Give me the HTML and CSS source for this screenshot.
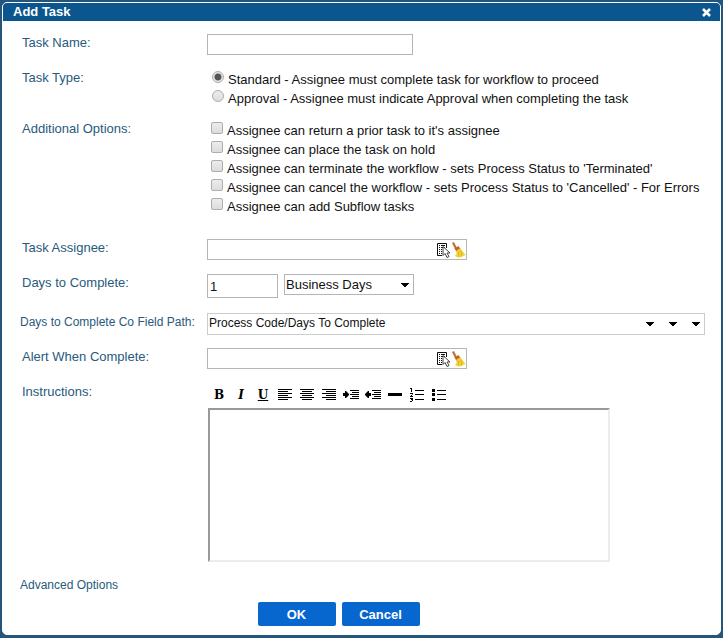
FILE: index.html
```html
<!DOCTYPE html>
<html lang="en">
<head>
<meta charset="utf-8">
<title>Add Task</title>
<link rel="stylesheet" href="styles.css">
</head>
<body>
<svg class="defs" aria-hidden="true">
  <symbol id="pick" viewBox="0 0 15 16">
    <path d="M10.500 6V1.500H1.500V13.500H6" fill="#fff" stroke="#111"/>
    <path d="M3 3.500h1M5 3.500h4M3 5.500h1M5 5.500h4M3 7.500h1M5 7.500h1M3 9.500h1M5 9.500h1M3 11.500h1M5 11.500h1" stroke="#111"/>
    <path d="M7 4.500v9l2-2 2 4 2-1-2-3.500h3z" fill="#fff" stroke="#444"/>
  </symbol>
  <symbol id="broom" viewBox="0 0 15 16">
    <path d="M1 1l2-1 3 6-2 1z" fill="#b5793a"/>
    <path d="M3.500 6.500l4-2.500 2 3-4 3z" fill="#c9602c"/>
    <path d="M5 9l4.500-3c1.500 3 3 4 5 7L9 15.500c-2.500 0-4-.5-5-2 1.500-.5 2-2 1-4.500z" fill="#f2d435"/>
    <path d="M7 9.500c1 2 1 3.500 0 5M9 8.500c2 2 2 4 1.500 6" fill="none" stroke="#cfa41e" stroke-width=".8"/>
  </symbol>
  <symbol id="arrow" viewBox="0 0 8 4">
    <path d="M0 0h8v1H7v1H6v1H5v1H3V3H2V2H1V1H0z"/>
  </symbol>
</svg>

<form class="dialog">
  <header class="titlebar">
    <h1 class="title">Add Task</h1>
    <button type="button" class="close" aria-label="Close"><svg width="9" height="9" viewBox="0 0 9 9"><path d="M1 1l7 7M8 1L1 8" stroke="#fff" stroke-width="2.600"/></svg></button>
  </header>

  <main class="content">
    <div class="row">
      <label class="label" for="name">Task Name:</label>
      <input class="field field-name" id="name" type="text">
    </div>

    <div class="row" role="radiogroup" aria-labelledby="type-label">
      <span class="label" id="type-label">Task Type:</span>
      <div class="options">
        <label class="option option-radio"><input class="tick radio" type="radio" name="type" checked>Standard - Assignee must complete task for workflow to proceed</label>
        <label class="option option-radio"><input class="tick radio" type="radio" name="type">Approval - Assignee must indicate Approval when completing the task</label>
      </div>
    </div>

    <div class="row" role="group" aria-labelledby="extra-label">
      <span class="label" id="extra-label">Additional Options:</span>
      <div class="options">
        <label class="option"><input class="tick" type="checkbox">Assignee can return a prior task to it's assignee</label>
        <label class="option"><input class="tick" type="checkbox">Assignee can place the task on hold</label>
        <label class="option"><input class="tick" type="checkbox">Assignee can terminate the workflow - sets Process Status to 'Terminated'</label>
        <label class="option"><input class="tick" type="checkbox">Assignee can cancel the workflow - sets Process Status to 'Cancelled' - For Errors</label>
        <label class="option"><input class="tick" type="checkbox">Assignee can add Subflow tasks</label>
      </div>
    </div>

    <div class="row row-section">
      <label class="label" for="assignee">Task Assignee:</label>
      <div class="field picker">
        <input class="bare" id="assignee" type="text">
        <button type="button" class="tool" aria-label="Select"><svg width="15" height="16"><use href="#pick"/></svg></button>
        <button type="button" class="tool" aria-label="Clear"><svg width="15" height="16"><use href="#broom"/></svg></button>
      </div>
    </div>

    <div class="row">
      <label class="label" for="days">Days to Complete:</label>
      <div class="inline">
        <input class="field field-days" id="days" type="text" value="1">
        <div class="select-wrap">
          <select class="field select" aria-label="Day type"><option>Business Days</option><option>Calendar Days</option></select>
          <svg class="select-arrow" width="8" height="4"><use href="#arrow"/></svg>
        </div>
      </div>
    </div>

    <div class="row row-path">
      <label class="label label-small" for="path">Days to Complete Co Field Path:</label>
      <div class="field path">
        <input class="bare bare-small" id="path" type="text" value="Process Code/Days To Complete">
        <button type="button" class="drop" aria-label="First level"><svg width="8" height="4"><use href="#arrow"/></svg></button>
        <button type="button" class="drop" aria-label="Second level"><svg width="8" height="4"><use href="#arrow"/></svg></button>
        <button type="button" class="drop" aria-label="Third level"><svg width="8" height="4"><use href="#arrow"/></svg></button>
      </div>
    </div>

    <div class="row">
      <label class="label" for="alert">Alert When Complete:</label>
      <div class="field picker">
        <input class="bare" id="alert" type="text">
        <button type="button" class="tool" aria-label="Select"><svg width="15" height="16"><use href="#pick"/></svg></button>
        <button type="button" class="tool" aria-label="Clear"><svg width="15" height="16"><use href="#broom"/></svg></button>
      </div>
    </div>

    <div class="row">
      <label class="label" for="instructions">Instructions:</label>
      <div class="editor">
        <div class="toolbar" role="toolbar" aria-label="Formatting">
          <button type="button" class="format" aria-label="Bold"><b>B</b></button>
          <button type="button" class="format" aria-label="Italic"><i>I</i></button>
          <button type="button" class="format" aria-label="Underline"><u>U</u></button>
          <button type="button" class="format" aria-label="Align left"><svg width="16" height="14"><path d="M1 1.500h14M1 3.500h10M1 5.500h14M1 7.500h10M1 9.500h14M1 11.500h10"/></svg></button>
          <button type="button" class="format" aria-label="Align center"><svg width="16" height="14"><path d="M1 1.500h14M3 3.500h10M1 5.500h14M3 7.500h10M1 9.500h14M3 11.500h10"/></svg></button>
          <button type="button" class="format" aria-label="Align right"><svg width="16" height="14"><path d="M1 1.500h14M5 3.500h10M1 5.500h14M5 7.500h10M1 9.500h14M5 11.500h10"/></svg></button>
          <button type="button" class="format" aria-label="Indent"><svg width="16" height="14"><path d="M7 2.500h9M9 4.500h7M7 6.500h9M9 8.500h7M7 10.500h9"/><path class="solid" d="M-1 5h3V3h1l3 3v1L3 10H2V8h-3z"/></svg></button>
          <button type="button" class="format" aria-label="Outdent"><svg width="16" height="14"><path d="M7 2.500h9M9 4.500h7M7 6.500h9M9 8.500h7M7 10.500h9"/><path class="solid" d="M6 5H4V3H3L0 6v1l3 3h1V8h2z"/></svg></button>
          <button type="button" class="format" aria-label="Horizontal rule"><svg width="16" height="14"><path class="solid" d="M1 5h14v3H1z"/></svg></button>
          <button type="button" class="format" aria-label="Numbered list"><svg width="16" height="14"><path d="M6 2.500h9M6 6.500h9M6 11.500h9M1 .5h2M2.500 0v4M1 5.500h2M3.500 5v1.500M2 7.500h1M1 8.500h3M1 10.500h2M3.500 10v3M2 11.500h1M1 13.500h2"/></svg></button>
          <button type="button" class="format" aria-label="Bulleted list"><svg width="16" height="14"><path d="M6 2.500h9M6 6.500h9M6 11.500h9"/><path class="solid" d="M1 1h3v3H1zM1 5h3v3H1zM1 10h3v3H1z"/></svg></button>
        </div>
        <textarea class="text" id="instructions"></textarea>
      </div>
    </div>

    <a class="advanced" href="#">Advanced Options</a>

    <footer class="actions">
      <button type="submit" class="action">OK</button>
      <button type="button" class="action">Cancel</button>
    </footer>
  </main>
</form>
</body>
</html>
```
FILE: styles.css
```css
* {
  box-sizing: border-box;
}

body {
  margin: 0;
  min-height: 100vh;
  padding: 2px 2px 3px;
  background: #24567c;
  font: 13px/19px "Liberation Sans", Arial, sans-serif;
  color: #111;
}

button,
input,
select,
textarea {
  margin: 0;
  padding: 0;
  font: inherit;
  color: inherit;
}

button {
  border: 0;
  background: none;
}

svg {
  display: block;
}

.defs {
  position: absolute;
  width: 0;
  height: 0;
}

.dialog {
  border: 1px solid #fff;
  border-radius: 5px;
  background: #fff;
  overflow: hidden;
}

.titlebar {
  display: flex;
  align-items: center;
  justify-content: space-between;
  height: 18px;
  padding: 0 9px 0 10px;
  background: #0b568e;
}

.title {
  margin: 0;
  font-size: 13px;
  line-height: 18px;
  color: #fff;
}

.close {
  padding-top: 1px;
}

.content {
  padding: 13px 15px 8px 19px;
}

.row {
  display: grid;
  grid-template-columns: 185px minmax(0, 1fr);
  align-items: start;
  min-height: 22px;
  margin-bottom: 13px;
}

.row-section {
  margin-top: 24px;
}

.row-path {
  margin-top: 15px;
}

.label {
  line-height: 17px;
  color: #285a7c;
}

.label-small {
  font-size: 12px;
  line-height: 19px;
  white-space: nowrap;
}

.label-small,
.advanced {
  margin-left: -2px;
}

.options {
  display: flex;
  flex-direction: column;
  padding-left: 4px;
}

.option {
  display: flex;
  gap: 4px;
  line-height: 21px;
  height: 19px;
}

.option-radio {
  padding-left: 1px;
}

.tick {
  appearance: none;
  flex: none;
  width: 12px;
  height: 12px;
  margin-top: 2px;
  border: 1px solid #adadad;
  border-radius: 2px;
  background: linear-gradient(#ececec, #dcdcdc);
}

.radio {
  border-radius: 50%;
}

.radio:checked {
  background: radial-gradient(circle, #555 0 3px, #e6e6e6 4px);
}

.field {
  height: 21px;
  border: 1px solid #b5b5b5;
  border-radius: 0;
  background: #fff;
}

.field-name {
  width: 100%;
  max-width: 206px;
  padding: 0 2px;
}

.picker {
  display: flex;
  align-items: center;
  max-width: 260px;
}

.bare {
  flex: 1;
  min-width: 0;
  height: 100%;
  padding: 0 1px;
  border: 0;
  background: none;
}

.bare-small {
  height: 18px;
  font-size: 12px;
}

.inline {
  display: flex;
  align-items: flex-start;
  gap: 6px;
}

.field-days {
  width: 71px;
  height: 24px;
  padding: 0 2px;
}

.select-wrap {
  position: relative;
  width: 130px;
}

.select {
  display: block;
  appearance: none;
  width: 100%;
  padding: 0 1px;
}

.select-arrow {
  position: absolute;
  top: 9px;
  right: 5px;
  pointer-events: none;
}

.path {
  display: flex;
  height: 22px;
  padding-right: 4px;
  border-color: #ccc;
}

.drop {
  display: grid;
  place-items: center end;
  width: 23px;
}

.editor {
  padding-left: 1px;
}

.toolbar {
  display: flex;
  height: 25px;
}

.format {
  display: grid;
  place-items: center;
  width: 22px;
  height: 23px;
  font: bold 12px/22px "DejaVu Serif", serif;
  color: #000;
}

.format path {
  fill: none;
  stroke: #000;
}

.format .solid {
  fill: #000;
  stroke: none;
}

.format b,
.format i,
.format u {
  font-weight: bold;
}

.text {
  display: block;
  width: 100%;
  max-width: 402px;
  height: 154px;
  border: 2px solid #ececec;
  border-top-color: #999;
  border-left-color: #999;
  resize: none;
}

.advanced {
  display: block;
  width: max-content;
  margin-top: 15px;
  margin-bottom: 8px;
  font-size: 12px;
  line-height: 17px;
  color: #285a7c;
  text-decoration: none;
}

.actions {
  display: flex;
  justify-content: center;
  gap: 6px;
  padding-right: 50px;
}

.action {
  width: 78px;
  height: 24px;
  border-radius: 2px;
  background: #0767cf;
  color: #fff;
  font-weight: bold;
}
```
